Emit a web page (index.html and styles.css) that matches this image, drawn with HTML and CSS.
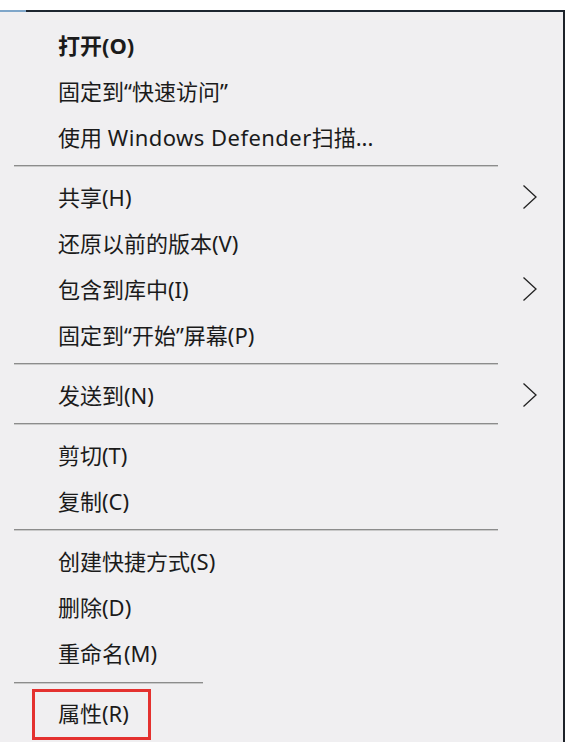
FILE: index.html
```html
<!DOCTYPE html>
<html lang="zh-CN">
<head>
<meta charset="utf-8">
<title>右键菜单</title>
<link rel="stylesheet" href="styles.css">
</head>
<body>
<div class="page">
  <div class="menu">
    <div class="topline"><span class="topline-blue"></span><span class="topline-dark"></span></div>
    <div class="items">
      <div class="item bold"><span>打开(O)</span></div>
      <div class="item"><span>固定到“快速访问”</span></div>
      <div class="item"><span>使用 <span class="lat">Windows Defender</span>扫描...</span></div>
      <div class="sep"></div>
      <div class="item"><span>共享(H)</span><svg class="chev" width="16" height="26" viewBox="0 0 16 26"><path d="M1.5 1.5 L14 13 L1.5 24.5" fill="none" stroke="#222" stroke-width="1.3"/></svg></div>
      <div class="item"><span>还原以前的版本(V)</span></div>
      <div class="item"><span>包含到库中(I)</span><svg class="chev" width="16" height="26" viewBox="0 0 16 26"><path d="M1.5 1.5 L14 13 L1.5 24.5" fill="none" stroke="#222" stroke-width="1.3"/></svg></div>
      <div class="item"><span>固定到“开始”屏幕(P)</span></div>
      <div class="sep"></div>
      <div class="item"><span>发送到(N)</span><svg class="chev" width="16" height="26" viewBox="0 0 16 26"><path d="M1.5 1.5 L14 13 L1.5 24.5" fill="none" stroke="#222" stroke-width="1.3"/></svg></div>
      <div class="sep"></div>
      <div class="item"><span>剪切(T)</span></div>
      <div class="item"><span>复制(C)</span></div>
      <div class="sep"></div>
      <div class="item"><span>创建快捷方式(S)</span></div>
      <div class="item"><span>删除(D)</span></div>
      <div class="item"><span>重命名(M)</span></div>
      <div class="sep short"></div>
      <div class="item last"><span>属性(R)</span><div class="highlight"></div></div>
    </div>
  </div>
</div>
</body>
</html>
```

FILE: styles.css
```css
html, body {
  margin: 0;
  padding: 0;
  background: #ffffff;
}
.page {
  padding-top: 10px;
  width: 566px;
  height: 732px;
  overflow: hidden;
}
.menu {
  width: 563px;
  background: #f0eff1;
  border-right: 2px solid #1d2229;
  font-family: "Noto Sans", "Noto Sans CJK SC", sans-serif;
  font-size: 22px;
  color: #1b1b1b;
}
.topline {
  display: flex;
  height: 2px;
}
.topline-blue {
  width: 26px;
  background: #7fa6c9;
}
.topline-dark {
  flex: 1;
  background: #1d2630;
}
.items {
  padding-top: 10px;
  padding-bottom: 20px;
}
.item {
  position: relative;
  height: 46px;
  display: flex;
  align-items: center;
  justify-content: space-between;
  padding-left: 58px;
  padding-right: 25px;
  line-height: 1;
}
.bold {
  font-weight: 700;
}
.lat {
  letter-spacing: 0.45px;
}
.chev {
  display: block;
}
.sep {
  height: 1px;
  margin: 5px 65px 7px 14px;
  background: #8c8c8c;
  border-bottom: 1px solid #c9c9c9;
}
.sep.short {
  margin-top: 6px;
  margin-bottom: 6px;
  margin-right: 360px;
}
.highlight {
  position: absolute;
  left: 32px;
  top: -1px;
  width: 113px;
  height: 45px;
  border: 3px solid #e4312f;
}
```
